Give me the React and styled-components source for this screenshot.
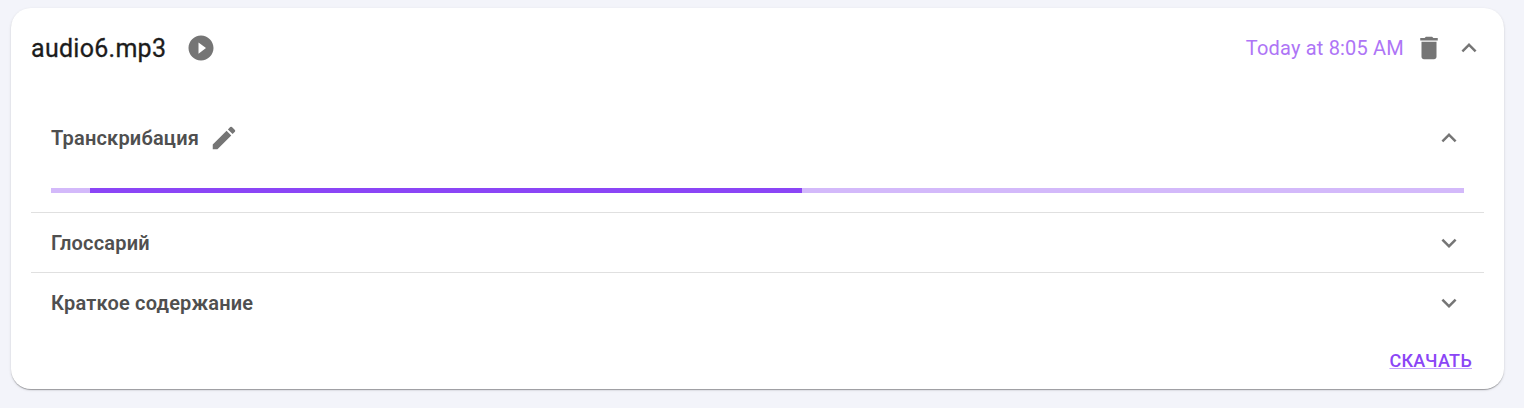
import React from "react";
import styled, { createGlobalStyle } from "styled-components";

const Global = createGlobalStyle`
  *, *::before, *::after { box-sizing: border-box; }
  body { margin: 0; background: #f3f4fa; font-family: Roboto, "Noto Sans", sans-serif; }
`;
const Page = styled.main`
  height: 408px;
  padding: 8px 20px 18px 11px;
`;
const Card = styled.section`
  height: 381px;
  padding: 0 20px;
  background: #fff;
  border-radius: 20px;
  box-shadow: 0 2px 1px -1px rgba(0,0,0,.2), 0 1px 1px rgba(0,0,0,.14), 0 1px 3px rgba(0,0,0,.12);
`;
const Header = styled.header`
  display: flex;
  align-items: center;
  height: 80px;
`;
const FileName = styled.h1`
  margin: 0 20px 0 0;
  padding-top: 2px;
  font-size: 25px;
  line-height: 32px;
  font-weight: 400;
  letter-spacing: 0.28px;
  color: #1c1c1c;
  -webkit-text-stroke: 0.3px #1c1c1c;
`;
const Time = styled.span`
  margin-left: auto;
  font-size: 20px;
  letter-spacing: 0.19px;
  color: #ae75f6;
`;
const Icon = styled.svg`
  flex: none;
  display: block;
  width: ${(p) => p.$size}px;
  height: ${(p) => p.$size}px;
  margin-left: ${(p) => p.$gap || 0}px;
  fill: #757575;
`;
const Sections = styled.div`
  padding-top: 20px;
`;
const Section = styled.section`
  height: ${(p) => p.$height}px;
  padding: 0 20px;
  border-top: ${(p) => (p.$divided ? "1px solid #e0e0e0" : "0")};
`;
const SectionHead = styled.div`
  display: flex;
  align-items: center;
  height: 60px;
`;
const SectionTitle = styled.h2`
  margin: 0;
  font-size: 20px;
  line-height: 30px;
  font-weight: 600;
  letter-spacing: 0.19px;
  color: #4f4f4f;
`;
const Toggle = styled.span`
  margin-left: auto;
`;
const Track = styled.div`
  display: flex;
  height: 5px;
  margin-top: 20px;
  padding-left: 39px;
  background: #d3b9fa;
`;
const Bar = styled.div`
  width: 712px;
  background: #8b45f6;
`;
const Footer = styled.footer`
  display: flex;
  justify-content: flex-end;
  padding: 18px 12px 0 0;
`;
const Download = styled.a`
  font-size: 18px;
  line-height: 22px;
  font-weight: 500;
  letter-spacing: 0.28px;
  color: #8b45f6;
  text-decoration: underline;
  text-decoration-color: rgba(139,69,246,.5);
`;

const paths = {
  play: "M12 2C6.48 2 2 6.48 2 12s4.48 10 10 10 10-4.48 10-10S17.52 2 12 2zm-2 14.5v-9l6 4.5-6 4.5z",
  trash: "M6 19c0 1.1.9 2 2 2h8c1.1 0 2-.9 2-2V7H6v12zM19 4h-3.5l-1-1h-5l-1 1H5v2h14V4z",
  up: "M12 8l-6 6 1.41 1.41L12 10.83l4.59 4.58L18 14z",
  down: "M16.59 8.59L12 13.17 7.41 8.59 6 10l6 6 6-6z",
  pencil: "M3 17.25V21h3.75L17.81 9.94l-3.75-3.75L3 17.25zM20.71 7.04c.39-.39.39-1.02 0-1.41l-2.34-2.34a.9959.9959 0 0 0-1.41 0l-1.83 1.83 3.75 3.75 1.83-1.83z",
};
const Glyph = ({ name, size = 30, gap }) => (
  <Icon viewBox="0 0 24 24" $size={size} $gap={gap} aria-hidden="true">
    <path d={paths[name]} />
  </Icon>
);

function Panel({ title, height, divided, editable, open, children }) {
  return (
    <Section $height={height} $divided={divided}>
      <SectionHead>
        <SectionTitle>{title}</SectionTitle>
        {editable && <Glyph name="pencil" gap={10} />}
        <Toggle><Glyph name={open ? "up" : "down"} /></Toggle>
      </SectionHead>
      {children}
    </Section>
  );
}

export default function App() {
  return (
    <Page>
      <Global />
      <Card>
        <Header>
          <FileName>audio6.mp3</FileName>
          <Glyph name="play" />
          <Time>Today at 8:05 AM</Time>
          <Glyph name="trash" gap={10} />
          <Glyph name="up" gap={10} />
        </Header>
        <Sections>
          <Panel title="Транскрибация" height={104} editable open>
            <Track><Bar /></Track>
          </Panel>
          <Panel title="Глоссарий" height={60} divided />
          <Panel title="Краткое содержание" height={60} divided />
        </Sections>
        <Footer><Download>СКАЧАТЬ</Download></Footer>
      </Card>
    </Page>
  );
}
